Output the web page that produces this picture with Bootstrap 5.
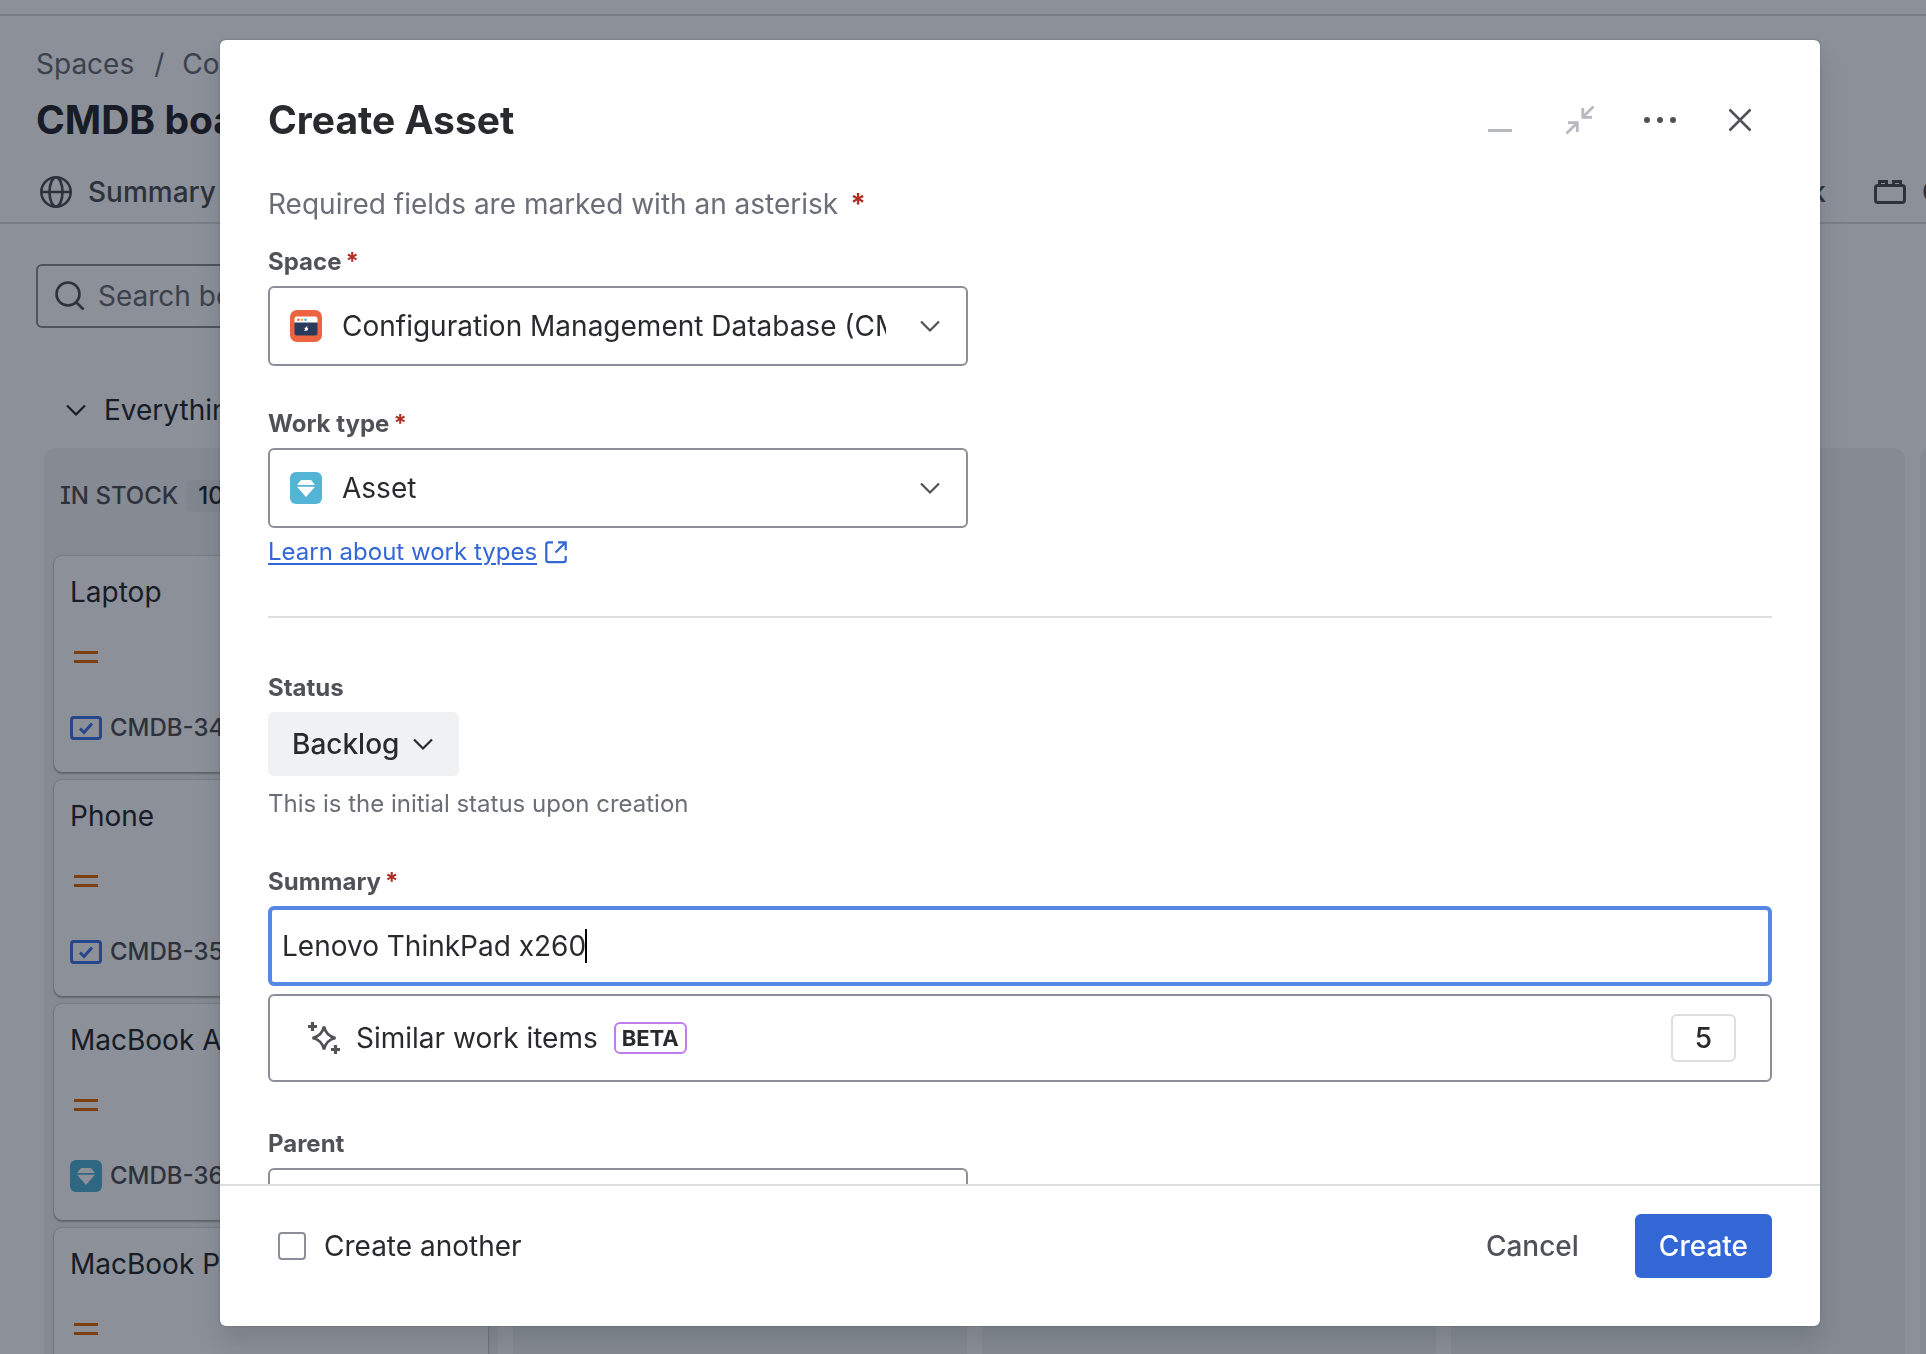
<!DOCTYPE html>
<html lang="en">
<head>
<meta charset="utf-8">
<meta name="viewport" content="width=device-width, initial-scale=1">
<title>Create Asset</title>
<link href="https://cdn.jsdelivr.net/npm/bootstrap@5.3.0/dist/css/bootstrap.min.css" rel="stylesheet">
<style>
  :root { --ink: #292a2e; --subtle: #505258; --faint: #6b6e76; --line: #dddee1; --edge: #8c8f97; --blue: #3367d6; }
  body { font-family: Inter, "Liberation Sans", sans-serif; font-size: 28px; line-height: 40px; color: var(--ink); overflow: hidden; }
  svg { display: block; flex: none; fill: none; stroke: currentColor; }
  .text-soft { color: var(--subtle); }
  .text-faint { color: var(--faint); }
  .heading { font-size: 39px; line-height: 48px; font-weight: 700; }
  .caption { font-size: 24px; line-height: 32px; }
  .board-page { height: 100vh; overflow: hidden; }
  .top-strip { height: 16px; border-bottom: 2px solid var(--line); }

  /* board page */
  .crumbs { --bs-breadcrumb-divider: "/"; padding: 28px 36px 0; }
  .crumbs .breadcrumb { gap: 20px; }
  .crumbs .breadcrumb-item + .breadcrumb-item { padding-left: 0; }
  .crumbs .breadcrumb-item + .breadcrumb-item::before { padding-right: 18px; color: inherit; }
  .crumbs a { color: var(--faint); text-decoration: none; }
  .board-title { padding: 12px 36px 0; }
  .tabs { padding: 28px 0 10px 40px; gap: 16px; border-bottom: 2px solid var(--line); overflow: hidden; }
  .tabs a { display: flex; align-items: center; gap: 16px; font-weight: 500; color: var(--subtle); text-decoration: none; white-space: nowrap; }
  .tabs-end { gap: 48px; }
  .tab-cut { width: 4px; }
  .search-box { margin: 40px 36px 0; width: 420px; height: 64px; padding: 0 16px; gap: 12px; border: 2px solid var(--edge); border-radius: 6px; }
  .search-box input { border: 0; padding: 0; font-size: 28px; background: none; min-width: 0; }
  .search-box input::placeholder { color: var(--faint); opacity: 1; }
  .swimlane { padding: 62px 60px 18px; gap: 12px; border: 0; background: none; color: var(--ink); }
  .columns { gap: 15px; padding-left: 44px; }
  .lane { flex: 0 0 454px; height: 920px; padding: 32px 10px 0; background: #f3f4f6; border-radius: 12px; }
  .lane-head { padding: 0 6px; gap: 8px; height: 32px; margin-bottom: 44px; font-weight: 500; color: var(--subtle); font-feature-settings: "cv08"; }
  .lane-count { background: #e9eaed; border-radius: 6px; padding: 0 12px; color: var(--ink); }
  .work-card { height: 216px; margin-bottom: 8px; padding: 16px; border-radius: 8px; background: #fff; box-shadow: 0 2px 2px rgba(30,31,33,.28), 0 0 2px rgba(30,31,33,.4); }
  .prio { width: 24px; height: 12px; margin: 39px 4px; border: solid #e06c00; border-width: 3px 0; }
  .work-key { gap: 8px; padding-top: 10px; font-weight: 500; color: var(--subtle); }

  /* dialog */
  .modal-backdrop.show { opacity: 1; background: rgba(5,12,31,.46); }
  .modal-area { padding: 0 106px 0 220px; overflow: hidden; }
  .create-dialog { max-width: 1720px; height: calc(100vh - 68px); margin: 40px 0 28px; }
  .create-dialog .modal-content { height: 100%; border: 0; border-radius: 6px; color: var(--ink); box-shadow: 0 16px 24px rgba(30,31,33,.15), 0 0 2px rgba(30,31,33,.31); overflow: hidden; }
  .create-dialog .modal-header { padding: 48px 48px 32px; border: 0; }
  .tool-btn { width: 64px; height: 64px; border: 0; background: none; color: var(--subtle); display: flex; align-items: center; justify-content: center; padding: 0; }
  .tool-btn.off { color: #b7b9be; }
  .create-dialog .modal-body { padding: 0 48px; overflow: hidden; }
  .req { color: #ae2e24; font-weight: 700; }
  .field-label { display: flex; gap: 4px; font-size: 24px; line-height: 32px; font-weight: 650; color: var(--subtle); margin-bottom: 8px; }
  .pick { max-width: 700px; height: 80px; padding: 0 24px 0 20px; gap: 20px; border: 2px solid var(--edge); border-radius: 6px; }
  .pick .form-select { border: 0; padding: 0; height: 40px; min-width: 0; font-size: 28px; line-height: 40px; color: var(--ink); background: none; margin-right: 12px; border-radius: 0; text-overflow: clip; }
  .learn { color: var(--blue); gap: 8px; text-decoration: none; }
  .learn span { text-decoration: underline; text-underline-offset: 3px; text-decoration-thickness: 2px; }
  .rule { height: 2px; background: var(--line); }
  .status-btn { height: 64px; padding: 0 24px; gap: 12px; border: 0; border-radius: 6px; background: #f0f1f2; color: var(--ink); font-weight: 500; }
  .summary-box { height: 80px; padding: 0 10px; border: 4px solid #5787e5; border-radius: 6px; }
  .summary-box input { border: 0; padding: 0; width: 303px; font-size: 28px; outline: 0; color: var(--ink); background: none; }
  .caret { width: 2px; height: 34px; background: #000; }
  .similar { height: 88px; padding: 0 34px 0 38px; gap: 16px; border: 2px solid var(--edge); border-radius: 6px; background: #fff; color: var(--ink); }
  .beta { height: 32px; padding: 0 6px; border: 2px solid #bf7df0; border-radius: 6px; font-size: 22px; line-height: 28px; font-weight: 700; }
  .similar-count { width: 65px; height: 48px; line-height: 44px; border: 2px solid var(--line); border-radius: 6px; font-weight: 500; }
  .create-foot { padding: 28px 48px 48px; border-top: 2px solid var(--line); }
  .again { gap: 18px; padding-left: 10px; }
  .again .form-check-input { width: 28px; height: 28px; margin: 0; border: 2px solid var(--edge); border-radius: 4px; }
  .foot-btn { height: 64px; padding: 0 24px; border: 0; border-radius: 6px; background: none; font-weight: 500; color: var(--subtle); }
  .foot-btn.main { background: var(--blue); color: #fff; }
  .gap-foot { gap: 32px; }
  .space-a { margin-bottom: 42px; }
  .space-b { margin-bottom: 48px; }
  .space-c { margin-bottom: 54px; }
  .space-d { margin-bottom: 46px; }
  .lead-note { margin-bottom: 22px; gap: 12px; }
  .tight { margin-bottom: 8px; }
</style>
<script src="https://cdn.jsdelivr.net/npm/bootstrap@5.3.0/dist/js/bootstrap.bundle.min.js"></script>
</head>
<body>
<svg width="0" height="0" class="position-absolute" aria-hidden="true">
  <symbol id="i-chev" viewBox="0 0 24 24"><path d="M3 7.500 12 16.500 21 7.500" stroke-width="2.200"/></symbol>
  <symbol id="i-task" viewBox="0 0 32 32"><rect x="1.500" y="5.500" width="29" height="21" rx="2.500" stroke="#4478e6" stroke-width="3"/><path d="M10 16.500 14 20.500 22 11.500" stroke="#4478e6" stroke-width="3"/></symbol>
  <symbol id="i-gem" viewBox="0 0 32 32"><rect width="32" height="32" rx="6" fill="#53b4d6" stroke="none"/><path d="M11 8h10l4 5H7zM7 14.800h18L16 25z" fill="#fff" stroke="none"/></symbol>
</svg>

<div class="board-page">
<div class="top-strip"></div>
<nav class="crumbs text-faint" aria-label="breadcrumb">
  <ol class="breadcrumb mb-0">
    <li class="breadcrumb-item"><a href="#">Spaces</a></li>
    <li class="breadcrumb-item"><a href="#">Configuration</a></li>
  </ol>
</nav>
<h1 class="heading board-title mb-0">CMDB board</h1>
<nav class="tabs d-flex justify-content-between">
  <a href="#"><svg width="32" height="32" viewBox="0 0 32 32" stroke-width="2.600"><circle cx="16" cy="16" r="14.700"/><ellipse cx="16" cy="16" rx="6.500" ry="14.700"/><path d="M1.500 16h29"/></svg>Summary</a>
  <div class="tabs-end d-flex">
    <a href="#">Work</a>
    <a href="#"><svg width="32" height="32" viewBox="0 0 32 32" stroke-width="3"><rect x="1.500" y="9.500" width="29" height="17" rx="2.500"/><path d="M5.500 9V5.500h7V9M19.500 9V5.500h7V9"/></svg><span class="tab-cut">Components</span></a>
  </div>
</nav>
<label class="search-box d-flex align-items-center text-soft">
  <svg width="32" height="32" viewBox="0 0 32 32" stroke-width="2.600"><circle cx="14" cy="14" r="11.500"/><path d="m22 22 7.500 7.500"/></svg>
  <input class="form-control shadow-none" type="search" placeholder="Search board" aria-label="Search board">
</label>
<button class="swimlane d-flex align-items-center" type="button"><svg width="32" height="24"><use href="#i-chev"/></svg>Everything</button>
<main class="columns d-flex">
  <section class="lane">
    <div class="lane-head caption d-flex"><span>IN STOCK</span><span class="lane-count">10</span></div>
    <article class="work-card"><div>Laptop</div><div class="prio"></div><div class="work-key caption d-flex"><svg width="32" height="32"><use href="#i-task"/></svg>CMDB-34</div></article>
    <article class="work-card"><div>Phone</div><div class="prio"></div><div class="work-key caption d-flex"><svg width="32" height="32"><use href="#i-task"/></svg>CMDB-35</div></article>
    <article class="work-card"><div>MacBook Air</div><div class="prio"></div><div class="work-key caption d-flex"><svg width="32" height="32"><use href="#i-gem"/></svg>CMDB-36</div></article>
    <article class="work-card"><div>MacBook Pro</div><div class="prio"></div></article>
  </section>
  <section class="lane"></section>
  <section class="lane"></section>
  <section class="lane"></section>
  <section class="lane"></section>
</main>
</div>

<div class="modal-backdrop show"></div>
<div class="modal modal-area d-block" role="dialog" aria-labelledby="dialog-title">
  <div class="modal-dialog create-dialog">
    <form class="modal-content">
      <div class="modal-header">
        <h2 class="heading mb-0" id="dialog-title">Create Asset</h2>
        <div class="d-flex gap-3">
          <button type="button" class="tool-btn off" aria-label="Minimize"><svg width="32" height="32" viewBox="0 0 32 32" stroke-width="3"><path d="M4 26.500h24"/></svg></button>
          <button type="button" class="tool-btn off" aria-label="Exit full screen"><svg width="32" height="32" viewBox="0 0 32 32" stroke-width="2.800"><path d="M29.500 2.500 19 13M18.800 4v9.300H28M2.500 29.500 13 19M4 18.700h9.300V28"/></svg></button>
          <button type="button" class="tool-btn" aria-label="More actions"><svg width="32" height="32" viewBox="0 0 32 32"><g fill="currentColor" stroke="none"><circle cx="3" cy="16" r="3"/><circle cx="16" cy="16" r="3"/><circle cx="29" cy="16" r="3"/></g></svg></button>
          <button type="button" class="tool-btn" aria-label="Close"><svg width="32" height="32" viewBox="0 0 32 32" stroke-width="2.500"><path d="m5.500 5.500 21 21M26.500 5.500l-21 21"/></svg></button>
        </div>
      </div>
      <div class="modal-body">
        <p class="text-faint lead-note d-flex">Required fields are marked with an asterisk <span class="req">*</span></p>
        <div class="space-a">
          <label class="field-label" for="space">Space <span class="req">*</span></label>
          <div class="pick d-flex align-items-center text-soft">
            <svg width="32" height="32" viewBox="0 0 32 32"><g stroke="none"><rect width="32" height="32" rx="7" fill="#ed6540"/><path d="M4.500 13V9q0-2.500 2.500-2.500h18q2.500 0 2.500 2.500v4z" fill="#fff"/><path d="M4.500 12.500h23V23q0 2.500-2.500 2.500H7q-2.500 0-2.500-2.500z" fill="#2a3a5c"/><circle cx="8.500" cy="9.700" r="1.300" fill="#ef6a4b"/><circle cx="12" cy="9.700" r="1.300" fill="#f4b042"/><circle cx="15.500" cy="9.700" r="1.300" fill="#45b5dc"/><path d="m17.500 15.500-3.500 3.500h1.500l-1.500 1.800h2.800l1.200-1.300v-1.700h-1.200z" fill="#fff"/></g></svg>
            <select class="form-select shadow-none" id="space"><option>Configuration Management Database (CMDB)</option></select>
            <svg width="24" height="24"><use href="#i-chev"/></svg>
          </div>
        </div>
        <div class="tight">
          <label class="field-label" for="worktype">Work type <span class="req">*</span></label>
          <div class="pick d-flex align-items-center text-soft">
            <svg width="32" height="32"><use href="#i-gem"/></svg>
            <select class="form-select shadow-none" id="worktype"><option>Asset</option></select>
            <svg width="24" height="24"><use href="#i-chev"/></svg>
          </div>
        </div>
        <div class="d-flex space-b"><a href="#" class="learn caption d-flex align-items-center"><span>Learn about work types</span><svg width="22" height="24" viewBox="0 0 22 24" stroke-width="2.200"><path d="M8 2.300H3.500q-2.200 0-2.200 2.200v15.500q0 2.200 2.200 2.200h15q2.200 0 2.200-2.200V16M13 2.300h7.700v8M20.500 2.500 10.500 12.500"/></svg></a></div>
        <div class="rule space-c"></div>
        <div class="space-d">
          <label class="field-label" for="status">Status</label>
          <button type="button" id="status" class="status-btn d-flex align-items-center">Backlog <svg width="24" height="24"><use href="#i-chev"/></svg></button>
          <div class="caption text-faint pt-2 mt-1">This is the initial status upon creation</div>
        </div>
        <div class="tight">
          <label class="field-label" for="summary">Summary <span class="req">*</span></label>
          <div class="summary-box d-flex align-items-center"><input type="text" id="summary" value="Lenovo ThinkPad x260"><span class="caret"></span></div>
        </div>
        <button type="button" class="similar w-100 d-flex align-items-center space-d">
          <svg class="text-soft" width="32" height="32" viewBox="0 0 32 32" stroke-width="2.800"><path d="M16 4.500Q18 14 27.500 16 18 18 16 27.500 14 18 4.500 16 14 14 16 4.500z"/><path d="M0 4.500h9M4.500 0v9M23 27.500h9M27.500 23v9" stroke-width="3.200"/></svg>
          Similar work items <span class="beta">BETA</span><span class="similar-count ms-auto">5</span>
        </button>
        <label class="field-label" for="parent">Parent</label>
        <div class="pick d-flex align-items-center text-soft"><select class="form-select shadow-none" id="parent"><option></option></select></div>
      </div>
      <div class="create-foot d-flex align-items-center justify-content-between">
        <label class="again d-flex align-items-center"><input class="form-check-input" type="checkbox">Create another</label>
        <div class="d-flex gap-foot">
          <button type="button" class="foot-btn">Cancel</button>
          <button type="submit" class="foot-btn main">Create</button>
        </div>
      </div>
    </form>
  </div>
</div>
</body>
</html>
